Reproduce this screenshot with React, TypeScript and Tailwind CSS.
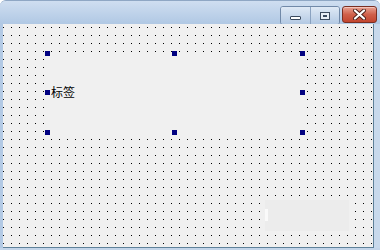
import React from 'react';

const handles = [
  { x: 42, y: 27 }, { x: 169, y: 27 }, { x: 297, y: 27 },
  { x: 42, y: 66 }, { x: 297, y: 66 },
  { x: 42, y: 106 }, { x: 169, y: 106 }, { x: 297, y: 106 },
];

function CaptionButtons() {
  return (
    <div className="flex items-start gap-[2px] pt-[5px] pr-[3px]">
      <div className="flex rounded-[3px] border border-[#7189a8] overflow-hidden shadow-[inset_0_1px_0_#eef4fb]">
        <div className="w-[30px] h-[17px] flex items-end justify-center pb-[4px] bg-gradient-to-b from-[#dfe9f5] to-[#b3c9e3] border-r border-[#8aa2c0]">
          <div className="w-[11px] h-[4px] rounded-[1px] bg-white border border-[#3b4a5e]" />
        </div>
        <div className="w-[28px] h-[17px] flex items-center justify-center bg-gradient-to-b from-[#dfe9f5] to-[#b3c9e3]">
          <div className="w-[10px] h-[8px] border border-[#3b4a5e] bg-[#e8eef6] flex items-center justify-center">
            <div className="w-[4px] h-[2px] border border-[#3b4a5e]" />
          </div>
        </div>
      </div>
      <div className="w-[35px] h-[17px] rounded-[3px] border border-[#7a2f22] bg-gradient-to-b from-[#e7a192] via-[#d0604a] to-[#c2452e] flex items-center justify-center shadow-[inset_0_1px_0_#f3c4b9]">
        <svg width="13" height="11" viewBox="0 0 13 11">
          <path d="M2 1.5 L11 9.5 M11 1.5 L2 9.5" stroke="#4a1e18" strokeWidth="4" strokeLinecap="round" />
          <path d="M2 1.5 L11 9.5 M11 1.5 L2 9.5" stroke="#ffffff" strokeWidth="2.2" strokeLinecap="round" />
        </svg>
      </div>
    </div>
  );
}

export default function App() {
  return (
    <div className="w-[380px] h-[250px] flex flex-col overflow-hidden rounded-t-[6px] bg-[#bdd2ea] border-t border-[#8fa7c4]">
      {/* title bar */}
      <div className="h-[23px] flex justify-end bg-gradient-to-b from-[#cfdef0] to-[#b0c8e4]">
        <CaptionButtons />
      </div>

      <div className="flex flex-1">
        <div className="w-[3px] bg-[#b2c9e4]" />
        {/* design surface */}
        <div className="relative flex-1 bg-[#f0f0f0] bg-[linear-gradient(90deg,#f0f0f0_7px,transparent_7px),linear-gradient(#f0f0f0_7px,#000_7px)] bg-[size:8px_8px] bg-[position:1px_4px] border-r border-b border-[#5f8199]">
          {/* label control */}
          <div className="absolute left-[45px] top-[29px] w-[255px] h-[80px] bg-[#f0f0f0]" />
          <span className="absolute left-[48px] top-[61px] text-[12px] leading-[14px] text-black font-['Noto_Sans_CJK_SC','Noto_Sans_CJK_JP',sans-serif]">
            标签
          </span>
          {handles.map((h, i) => (
            <div
              key={i}
              className="absolute w-[5px] h-[5px] bg-[#000080]"
              style={{ left: h.x, top: h.y }}
            />
          ))}

          {/* faded control */}
          <div className="absolute left-[262px] top-[176px] w-[84px] h-[31px] bg-[#ececec]">
            <div className="absolute left-0 top-[9px] w-[3px] h-[12px] bg-[#fafafa]" />
          </div>
        </div>
        <div className="w-[6px] bg-[#c8d9ec]" />
      </div>
      <div className="h-[2px] bg-[#c3d5ea]" />
    </div>
  );
}
